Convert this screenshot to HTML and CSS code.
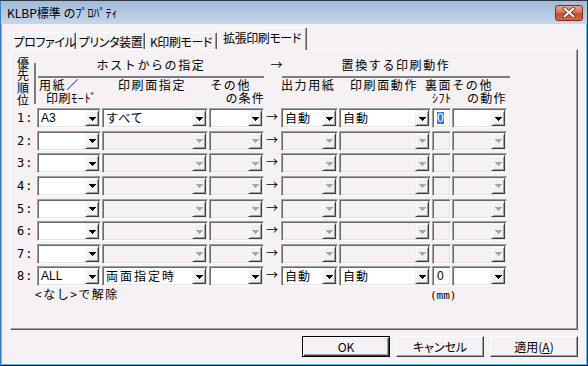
FILE: index.html
```html
<!DOCTYPE html>
<html lang="ja">
<head>
<meta charset="utf-8">
<title>KLBP標準 のﾌﾟﾛﾊﾟﾃｨ</title>
<link rel="stylesheet" href="styles.css">
</head>
<body>
<div class="window">
  <div class="titlebar">
    <span class="title">KLBP標準 のﾌﾟﾛﾊﾟﾃｨ</span>
    <span class="close"><svg width="14" height="11" viewBox="0 0 14 11"><path d="M2.5 1.5L11.5 9.5M11.5 1.5L2.5 9.5" stroke="#6b2619" stroke-width="3.6" stroke-linecap="round"/><path d="M2.5 1.5L11.5 9.5M11.5 1.5L2.5 9.5" stroke="#ffffff" stroke-width="2" stroke-linecap="round"/></svg></span>
  </div>
  <div class="body">
    <div class="tabs">
      <div class="tab t1">プロファイル</div>
      <div class="tab t2">プリンタ装置</div>
      <div class="tab t3">K印刷モード</div>
      <div class="tab t4 active">拡張印刷モード</div>
    </div>
    <div class="panel">
      <div class="head cols">
        <div class="prio"><span class="prio-text">優先順位</span><span class="prio-line"></span></div>
        <div class="grp grp-host">ホストからの指定</div>
        <div class="harrow">→</div>
        <div class="grp grp-rep">置換する印刷動作</div>
        <div class="h c1">用紙／<br><span class="ind1">印刷ﾓｰﾄﾞ</span></div>
        <div class="h c2">印刷面指定</div>
        <div class="h c3"><span class="ind3">その他</span><br>の条件</div>
        <div class="h c4">出力用紙</div>
        <div class="h c5">印刷面動作</div>
        <div class="h c67">裏面その他<br><span class="shift">ｼﾌﾄ</span><span class="dosa">の動作</span></div>
      </div>
      <div class="rows">
        <div class="row cols">
          <span class="num">1:</span>
          <div class="combo"><span class="val lat">A3</span><span class="dd"><svg width="7" height="4" viewBox="0 0 7 4"><path d="M0 0h7v1H0zM1 1h5v1H1zM2 2h3v1H2zM3 3h1v1H3z"/></svg></span></div>
          <div class="combo"><span class="val">すべて</span><span class="dd"><svg width="7" height="4" viewBox="0 0 7 4"><path d="M0 0h7v1H0zM1 1h5v1H1zM2 2h3v1H2zM3 3h1v1H3z"/></svg></span></div>
          <div class="combo"><span class="val"></span><span class="dd"><svg width="7" height="4" viewBox="0 0 7 4"><path d="M0 0h7v1H0zM1 1h5v1H1zM2 2h3v1H2zM3 3h1v1H3z"/></svg></span></div>
          <span class="arrow">→</span>
          <div class="combo"><span class="val">自動</span><span class="dd"><svg width="7" height="4" viewBox="0 0 7 4"><path d="M0 0h7v1H0zM1 1h5v1H1zM2 2h3v1H2zM3 3h1v1H3z"/></svg></span></div>
          <div class="combo"><span class="val">自動</span><span class="dd"><svg width="7" height="4" viewBox="0 0 7 4"><path d="M0 0h7v1H0zM1 1h5v1H1zM2 2h3v1H2zM3 3h1v1H3z"/></svg></span></div>
          <div class="field"><span class="sel">0</span></div>
          <div class="combo"><span class="val"></span><span class="dd"><svg width="7" height="4" viewBox="0 0 7 4"><path d="M0 0h7v1H0zM1 1h5v1H1zM2 2h3v1H2zM3 3h1v1H3z"/></svg></span></div>
        </div>
        <div class="row cols">
          <span class="num">2:</span>
          <div class="combo"><span class="val"></span><span class="dd"><svg width="7" height="4" viewBox="0 0 7 4"><path d="M0 0h7v1H0zM1 1h5v1H1zM2 2h3v1H2zM3 3h1v1H3z"/></svg></span></div>
          <div class="combo off"><span class="val"></span><span class="dd"><svg width="7" height="4" viewBox="0 0 7 4"><path d="M0 0h7v1H0zM1 1h5v1H1zM2 2h3v1H2zM3 3h1v1H3z"/></svg></span></div>
          <div class="combo off"><span class="val"></span><span class="dd"><svg width="7" height="4" viewBox="0 0 7 4"><path d="M0 0h7v1H0zM1 1h5v1H1zM2 2h3v1H2zM3 3h1v1H3z"/></svg></span></div>
          <span class="arrow">→</span>
          <div class="combo off"><span class="val"></span><span class="dd"><svg width="7" height="4" viewBox="0 0 7 4"><path d="M0 0h7v1H0zM1 1h5v1H1zM2 2h3v1H2zM3 3h1v1H3z"/></svg></span></div>
          <div class="combo off"><span class="val"></span><span class="dd"><svg width="7" height="4" viewBox="0 0 7 4"><path d="M0 0h7v1H0zM1 1h5v1H1zM2 2h3v1H2zM3 3h1v1H3z"/></svg></span></div>
          <div class="field off"></div>
          <div class="combo off"><span class="val"></span><span class="dd"><svg width="7" height="4" viewBox="0 0 7 4"><path d="M0 0h7v1H0zM1 1h5v1H1zM2 2h3v1H2zM3 3h1v1H3z"/></svg></span></div>
        </div>
        <div class="row cols">
          <span class="num">3:</span>
          <div class="combo"><span class="val"></span><span class="dd"><svg width="7" height="4" viewBox="0 0 7 4"><path d="M0 0h7v1H0zM1 1h5v1H1zM2 2h3v1H2zM3 3h1v1H3z"/></svg></span></div>
          <div class="combo off"><span class="val"></span><span class="dd"><svg width="7" height="4" viewBox="0 0 7 4"><path d="M0 0h7v1H0zM1 1h5v1H1zM2 2h3v1H2zM3 3h1v1H3z"/></svg></span></div>
          <div class="combo off"><span class="val"></span><span class="dd"><svg width="7" height="4" viewBox="0 0 7 4"><path d="M0 0h7v1H0zM1 1h5v1H1zM2 2h3v1H2zM3 3h1v1H3z"/></svg></span></div>
          <span class="arrow">→</span>
          <div class="combo off"><span class="val"></span><span class="dd"><svg width="7" height="4" viewBox="0 0 7 4"><path d="M0 0h7v1H0zM1 1h5v1H1zM2 2h3v1H2zM3 3h1v1H3z"/></svg></span></div>
          <div class="combo off"><span class="val"></span><span class="dd"><svg width="7" height="4" viewBox="0 0 7 4"><path d="M0 0h7v1H0zM1 1h5v1H1zM2 2h3v1H2zM3 3h1v1H3z"/></svg></span></div>
          <div class="field off"></div>
          <div class="combo off"><span class="val"></span><span class="dd"><svg width="7" height="4" viewBox="0 0 7 4"><path d="M0 0h7v1H0zM1 1h5v1H1zM2 2h3v1H2zM3 3h1v1H3z"/></svg></span></div>
        </div>
        <div class="row cols">
          <span class="num">4:</span>
          <div class="combo"><span class="val"></span><span class="dd"><svg width="7" height="4" viewBox="0 0 7 4"><path d="M0 0h7v1H0zM1 1h5v1H1zM2 2h3v1H2zM3 3h1v1H3z"/></svg></span></div>
          <div class="combo off"><span class="val"></span><span class="dd"><svg width="7" height="4" viewBox="0 0 7 4"><path d="M0 0h7v1H0zM1 1h5v1H1zM2 2h3v1H2zM3 3h1v1H3z"/></svg></span></div>
          <div class="combo off"><span class="val"></span><span class="dd"><svg width="7" height="4" viewBox="0 0 7 4"><path d="M0 0h7v1H0zM1 1h5v1H1zM2 2h3v1H2zM3 3h1v1H3z"/></svg></span></div>
          <span class="arrow">→</span>
          <div class="combo off"><span class="val"></span><span class="dd"><svg width="7" height="4" viewBox="0 0 7 4"><path d="M0 0h7v1H0zM1 1h5v1H1zM2 2h3v1H2zM3 3h1v1H3z"/></svg></span></div>
          <div class="combo off"><span class="val"></span><span class="dd"><svg width="7" height="4" viewBox="0 0 7 4"><path d="M0 0h7v1H0zM1 1h5v1H1zM2 2h3v1H2zM3 3h1v1H3z"/></svg></span></div>
          <div class="field off"></div>
          <div class="combo off"><span class="val"></span><span class="dd"><svg width="7" height="4" viewBox="0 0 7 4"><path d="M0 0h7v1H0zM1 1h5v1H1zM2 2h3v1H2zM3 3h1v1H3z"/></svg></span></div>
        </div>
        <div class="row cols">
          <span class="num">5:</span>
          <div class="combo"><span class="val"></span><span class="dd"><svg width="7" height="4" viewBox="0 0 7 4"><path d="M0 0h7v1H0zM1 1h5v1H1zM2 2h3v1H2zM3 3h1v1H3z"/></svg></span></div>
          <div class="combo off"><span class="val"></span><span class="dd"><svg width="7" height="4" viewBox="0 0 7 4"><path d="M0 0h7v1H0zM1 1h5v1H1zM2 2h3v1H2zM3 3h1v1H3z"/></svg></span></div>
          <div class="combo off"><span class="val"></span><span class="dd"><svg width="7" height="4" viewBox="0 0 7 4"><path d="M0 0h7v1H0zM1 1h5v1H1zM2 2h3v1H2zM3 3h1v1H3z"/></svg></span></div>
          <span class="arrow">→</span>
          <div class="combo off"><span class="val"></span><span class="dd"><svg width="7" height="4" viewBox="0 0 7 4"><path d="M0 0h7v1H0zM1 1h5v1H1zM2 2h3v1H2zM3 3h1v1H3z"/></svg></span></div>
          <div class="combo off"><span class="val"></span><span class="dd"><svg width="7" height="4" viewBox="0 0 7 4"><path d="M0 0h7v1H0zM1 1h5v1H1zM2 2h3v1H2zM3 3h1v1H3z"/></svg></span></div>
          <div class="field off"></div>
          <div class="combo off"><span class="val"></span><span class="dd"><svg width="7" height="4" viewBox="0 0 7 4"><path d="M0 0h7v1H0zM1 1h5v1H1zM2 2h3v1H2zM3 3h1v1H3z"/></svg></span></div>
        </div>
        <div class="row cols">
          <span class="num">6:</span>
          <div class="combo"><span class="val"></span><span class="dd"><svg width="7" height="4" viewBox="0 0 7 4"><path d="M0 0h7v1H0zM1 1h5v1H1zM2 2h3v1H2zM3 3h1v1H3z"/></svg></span></div>
          <div class="combo off"><span class="val"></span><span class="dd"><svg width="7" height="4" viewBox="0 0 7 4"><path d="M0 0h7v1H0zM1 1h5v1H1zM2 2h3v1H2zM3 3h1v1H3z"/></svg></span></div>
          <div class="combo off"><span class="val"></span><span class="dd"><svg width="7" height="4" viewBox="0 0 7 4"><path d="M0 0h7v1H0zM1 1h5v1H1zM2 2h3v1H2zM3 3h1v1H3z"/></svg></span></div>
          <span class="arrow">→</span>
          <div class="combo off"><span class="val"></span><span class="dd"><svg width="7" height="4" viewBox="0 0 7 4"><path d="M0 0h7v1H0zM1 1h5v1H1zM2 2h3v1H2zM3 3h1v1H3z"/></svg></span></div>
          <div class="combo off"><span class="val"></span><span class="dd"><svg width="7" height="4" viewBox="0 0 7 4"><path d="M0 0h7v1H0zM1 1h5v1H1zM2 2h3v1H2zM3 3h1v1H3z"/></svg></span></div>
          <div class="field off"></div>
          <div class="combo off"><span class="val"></span><span class="dd"><svg width="7" height="4" viewBox="0 0 7 4"><path d="M0 0h7v1H0zM1 1h5v1H1zM2 2h3v1H2zM3 3h1v1H3z"/></svg></span></div>
        </div>
        <div class="row cols">
          <span class="num">7:</span>
          <div class="combo"><span class="val"></span><span class="dd"><svg width="7" height="4" viewBox="0 0 7 4"><path d="M0 0h7v1H0zM1 1h5v1H1zM2 2h3v1H2zM3 3h1v1H3z"/></svg></span></div>
          <div class="combo off"><span class="val"></span><span class="dd"><svg width="7" height="4" viewBox="0 0 7 4"><path d="M0 0h7v1H0zM1 1h5v1H1zM2 2h3v1H2zM3 3h1v1H3z"/></svg></span></div>
          <div class="combo off"><span class="val"></span><span class="dd"><svg width="7" height="4" viewBox="0 0 7 4"><path d="M0 0h7v1H0zM1 1h5v1H1zM2 2h3v1H2zM3 3h1v1H3z"/></svg></span></div>
          <span class="arrow">→</span>
          <div class="combo off"><span class="val"></span><span class="dd"><svg width="7" height="4" viewBox="0 0 7 4"><path d="M0 0h7v1H0zM1 1h5v1H1zM2 2h3v1H2zM3 3h1v1H3z"/></svg></span></div>
          <div class="combo off"><span class="val"></span><span class="dd"><svg width="7" height="4" viewBox="0 0 7 4"><path d="M0 0h7v1H0zM1 1h5v1H1zM2 2h3v1H2zM3 3h1v1H3z"/></svg></span></div>
          <div class="field off"></div>
          <div class="combo off"><span class="val"></span><span class="dd"><svg width="7" height="4" viewBox="0 0 7 4"><path d="M0 0h7v1H0zM1 1h5v1H1zM2 2h3v1H2zM3 3h1v1H3z"/></svg></span></div>
        </div>
        <div class="row cols">
          <span class="num">8:</span>
          <div class="combo"><span class="val lat">ALL</span><span class="dd"><svg width="7" height="4" viewBox="0 0 7 4"><path d="M0 0h7v1H0zM1 1h5v1H1zM2 2h3v1H2zM3 3h1v1H3z"/></svg></span></div>
          <div class="combo"><span class="val wide">両面指定時</span><span class="dd"><svg width="7" height="4" viewBox="0 0 7 4"><path d="M0 0h7v1H0zM1 1h5v1H1zM2 2h3v1H2zM3 3h1v1H3z"/></svg></span></div>
          <div class="combo"><span class="val"></span><span class="dd"><svg width="7" height="4" viewBox="0 0 7 4"><path d="M0 0h7v1H0zM1 1h5v1H1zM2 2h3v1H2zM3 3h1v1H3z"/></svg></span></div>
          <span class="arrow">→</span>
          <div class="combo"><span class="val">自動</span><span class="dd"><svg width="7" height="4" viewBox="0 0 7 4"><path d="M0 0h7v1H0zM1 1h5v1H1zM2 2h3v1H2zM3 3h1v1H3z"/></svg></span></div>
          <div class="combo"><span class="val">自動</span><span class="dd"><svg width="7" height="4" viewBox="0 0 7 4"><path d="M0 0h7v1H0zM1 1h5v1H1zM2 2h3v1H2zM3 3h1v1H3z"/></svg></span></div>
          <div class="field"><span class="fval">0</span></div>
          <div class="combo"><span class="val"></span><span class="dd"><svg width="7" height="4" viewBox="0 0 7 4"><path d="M0 0h7v1H0zM1 1h5v1H1zM2 2h3v1H2zM3 3h1v1H3z"/></svg></span></div>
        </div>
      </div>
      <div class="foot cols">
        <span class="note">&lt;なし&gt;で解除</span>
        <span class="unit">(mm)</span>
      </div>
    </div>
    <div class="buttons">
      <span class="btn default">OK</span>
      <span class="btn">キャンセル</span>
      <span class="btn">適用(<u>A</u>)</span>
    </div>
  </div>
</div>
</body>
</html>
```
FILE: styles.css
```css
* { box-sizing: border-box; }
html, body { margin: 0; padding: 0; }
body {
  width: 588px;
  height: 366px;
  overflow: hidden;
  background: #ffffff;
  font-family: "Noto Sans CJK JP", "Noto Sans", sans-serif;
  font-size: 12px;
  color: #000;
}
.window {
  width: 588px;
  height: 366px;
  border: 1px solid #2e3845;
  border-left-color: #3f7fc8;
  border-bottom-color: #080808;
  background: #52c2e9;
  padding: 0 1px 1px 1px;
  display: flex;
  flex-direction: column;
}
.titlebar {
  height: 23px;
  margin: 0 -1px;
  flex: none;
  background: linear-gradient(#a2bad8, #b4cae4 55%, #c4d8ee);
  display: flex;
  align-items: center;
  justify-content: space-between;
  padding: 0 4px 0 6px;
}
.title { font-size: 12px; line-height: 14px; color: #000; }
.close {
  width: 28px;
  height: 16px;
  border: 1px solid #7b2a1d;
  border-radius: 3px;
  background: linear-gradient(#eaa391 0%, #d8765c 45%, #c24a2e 55%, #d56a47 100%);
  display: flex;
  align-items: center;
  justify-content: center;
}
.body {
  flex: 1;
  background: #f5f1f5;
  padding: 3px 8px 0 8px;
  display: flex;
  flex-direction: column;
}
.tabs {
  height: 22px;
  display: flex;
  align-items: flex-end;
  padding-left: 3px;
  flex: none;
}
.tab {
  height: 17px;
  border-top: 1px solid #fff;
  border-left: 1px solid #fff;
  border-right: 1px solid #5a5a5a;
  box-shadow: inset -1px 0 0 #a0a0a0;
  border-radius: 2px 2px 0 0;
  display: flex;
  align-items: center;
  justify-content: center;
  font-feature-settings: "palt";
  white-space: nowrap;
  letter-spacing: -0.4px;
  line-height: 14px;
  padding-top: 1px;
  flex: none;
}
.t1 { width: 63px; }
.t2 { width: 69px; }
.t3 { width: 72px; }
.t4 { width: 90px; }
.tab.active {
  height: 23px;
  margin-bottom: -1px;
  position: relative;
  z-index: 1;
  background: #f5f1f5;
  padding-top: 0;
  padding-bottom: 2px;
}
.panel {
  height: 281px;
  flex: none;
  border: 1px solid;
  border-color: #fff #5a5a5a #5a5a5a #fff;
  box-shadow: inset -1px -1px 0 #a0a0a0;
  padding: 6px 0 0 4px;
}
.cols {
  display: grid;
  grid-template-columns: 21px 64px 106px 55px 15px 57px 92px 19px 55px;
  column-gap: 1px;
}
.head {
  grid-template-rows: 22px 26px;
  letter-spacing: 1.6px;
  line-height: 12.5px;
}
.prio {
  grid-column: 1;
  grid-row: 1 / 3;
  display: flex;
  align-items: flex-start;
  padding: 1px 0 0 2px;
}
.prio-text {
  width: 13px;
  line-height: 12.4px;
  letter-spacing: 0;
}
.prio-line {
  width: 2px;
  height: 41px;
  margin: 6px 0 0 4px;
  background: #7c7c7c;
  flex: none;
}
.grp {
  grid-row: 1;
  display: flex;
  align-items: center;
  justify-content: center;
  border-bottom: 2px solid #7c7c7c;
  padding-bottom: 1px;
}
.grp-host { grid-column: 2 / 5; margin-left: 1px; }
.grp-rep { grid-column: 6 / 10; margin-left: 1px; margin-right: -3px; }
.harrow {
  grid-column: 5;
  grid-row: 1;
  letter-spacing: 0;
  text-align: center;
  padding-top: 3px;
  margin-left: 4px;
  margin-right: -4px;
}
.h { grid-row: 2; white-space: nowrap; padding-top: 1px; }
.c1 { grid-column: 2; padding-left: 2px; }
.ind1 { display: inline-block; margin-left: 7px; letter-spacing: 0.6px; }
.c2 { grid-column: 3; padding-left: 16px; }
.c3 { grid-column: 4; text-align: right; margin-right: -1px; letter-spacing: 1.2px; }
.ind3 { display: inline-block; margin-right: 14px; letter-spacing: 1.6px; }
.c4 { grid-column: 6; }
.c5 { grid-column: 7; padding-left: 11px; }
.c67 { grid-column: 8 / 10; margin-left: -7px; }
.shift { display: inline-block; margin-left: 7px; letter-spacing: 0.5px; width: 35px; }
.dosa { letter-spacing: 1.2px; }
.rows {
  display: flex;
  flex-direction: column;
  gap: 2.65px;
  margin-top: 4px;
}
.row { height: 20px; }
.num {
  font-family: "DejaVu Sans Mono", "Liberation Mono", monospace;
  font-size: 12px;
  letter-spacing: 1px;
  line-height: 20px;
  padding-left: 2px;
}
.combo, .field {
  height: 20px;
  border: 1px solid;
  border-color: #a0a0a0 #fff #fff #a0a0a0;
  box-shadow: inset 1px 1px 0 #696969, inset -1px -1px 0 #e3e3e3;
  padding: 1px;
  display: flex;
  background: #fff;
}
.combo.off, .field.off { background: #f5f1f5; }
.val {
  flex: 1;
  min-width: 0;
  padding-left: 2px;
  line-height: 16px;
  white-space: nowrap;
  overflow: hidden;
  letter-spacing: 1px;
}
.val.wide { letter-spacing: 2px; }
.val.lat, .fval, .sel {
  font-family: "Liberation Sans", Arial, sans-serif;
  letter-spacing: 0;
  font-size: 12px;
}
.dd {
  width: 14px;
  height: 16px;
  flex: none;
  background: #f3f0f3;
  border: 1px solid;
  border-color: #f3f0f3 #404040 #404040 #f3f0f3;
  box-shadow: inset 1px 1px 0 #fff, inset -1px -1px 0 #a0a0a0;
  display: flex;
  align-items: center;
  justify-content: center;
  color: #000;
  padding-top: 1px;
}
.dd svg { display: block; fill: currentColor; }
.off .dd { color: #a6a6a6; }
.field { align-items: center; padding-left: 3px; }
.sel {
  background: #3478d6;
  color: #fff;
  line-height: 12px;
  margin-left: 1px;
}
.fval { line-height: 16px; margin-left: 1px; }
.arrow {
  text-align: center;
  line-height: 18px;
  padding-right: 1px;
}
.foot {
  margin-top: 1px;
  line-height: 14px;
}
.note {
  grid-column: 2 / 6;
  margin-left: -2px;
  letter-spacing: 1.5px;
}
.unit {
  grid-column: 8 / 10;
  margin-left: -2px;
  padding-top: 2px;
  font-family: "DejaVu Sans Mono", "Liberation Mono", monospace;
  font-size: 11px;
  letter-spacing: 0;
}
.buttons {
  display: flex;
  justify-content: flex-end;
  gap: 6px;
  margin-top: 6px;
  flex: none;
}
.btn {
  width: 88px;
  height: 21px;
  border: 1px solid;
  border-color: #fff #404040 #404040 #fff;
  box-shadow: inset -1px -1px 0 #a0a0a0;
  display: flex;
  align-items: center;
  justify-content: center;
  font-feature-settings: "palt";
  line-height: 14px;
}
.btn.default {
  border: 1px solid #000;
  box-shadow: inset 1px 1px 0 #fff, inset -1px -1px 0 #404040, inset -2px -2px 0 #a0a0a0;
}
.btn u { text-decoration: underline; text-underline-offset: 1px; }
```
